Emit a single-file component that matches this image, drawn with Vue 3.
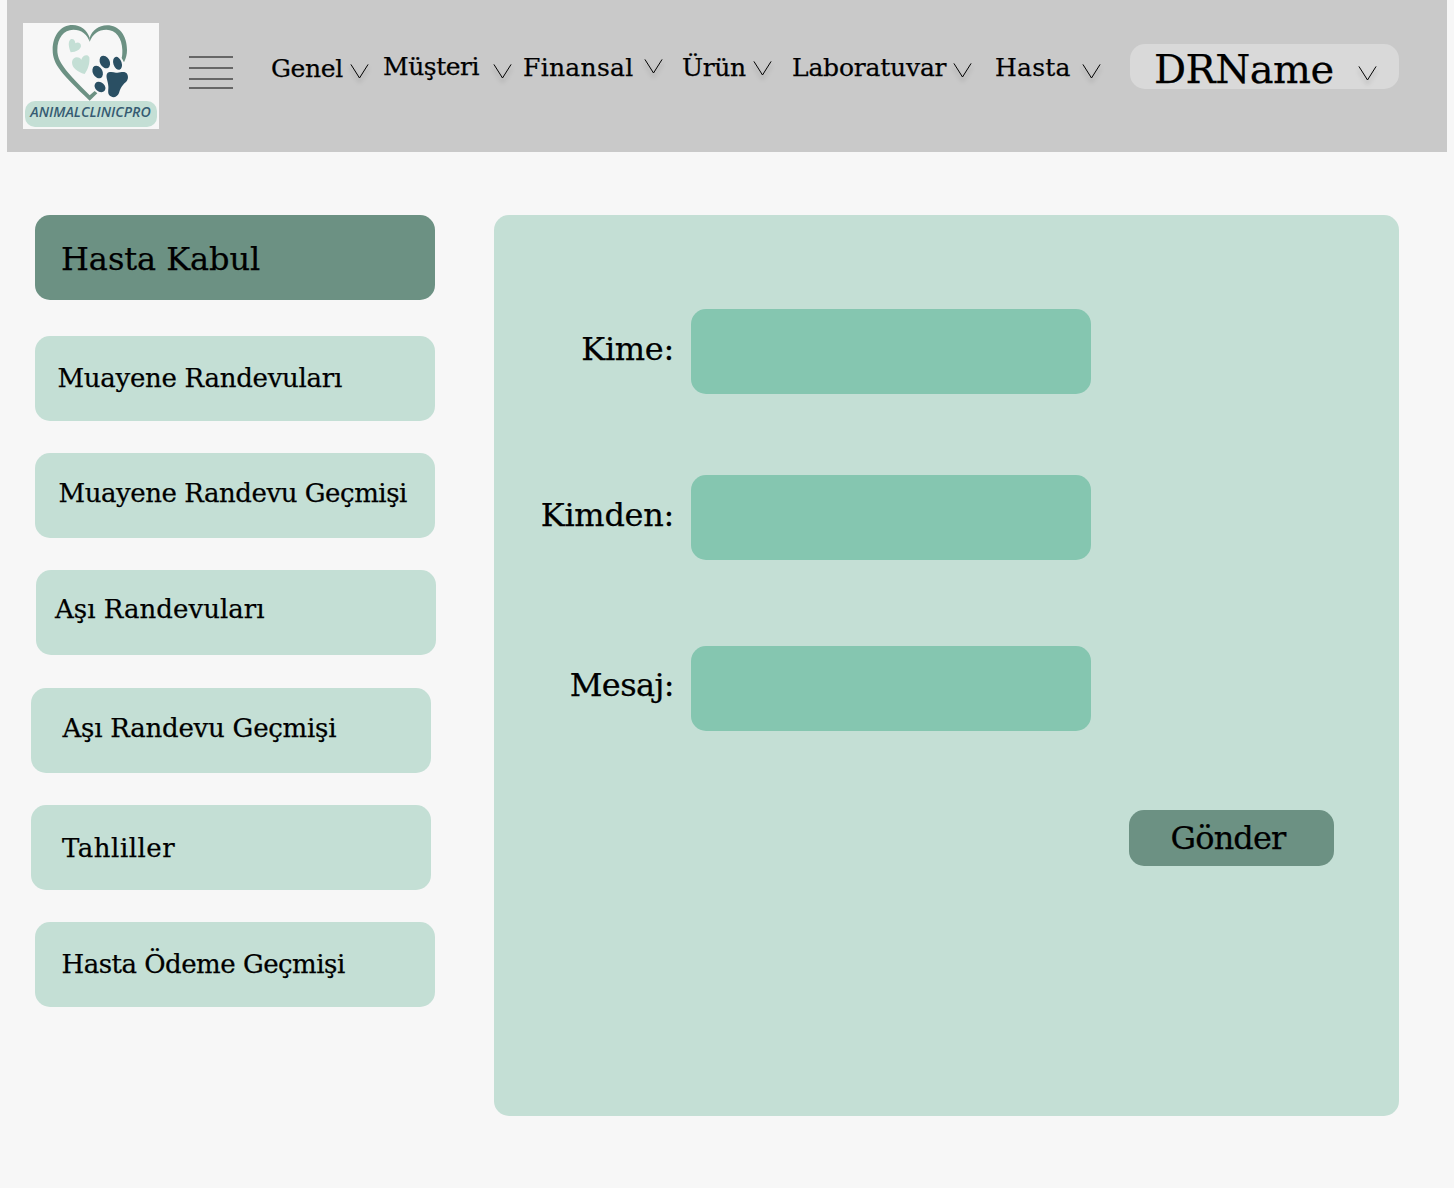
<script setup>
const navItems = [
  { key: 'genel', label: 'Genel' },
  { key: 'musteri', label: 'Müşteri' },
  { key: 'finansal', label: 'Finansal' },
  { key: 'urun', label: 'Ürün' },
  { key: 'laboratuvar', label: 'Laboratuvar' },
  { key: 'hasta', label: 'Hasta' },
]

const sideItems = [
  { key: 'exams', label: 'Muayene Randevuları' },
  { key: 'exam-history', label: 'Muayene Randevu Geçmişi' },
  { key: 'vaccines', label: 'Aşı Randevuları' },
  { key: 'vaccine-history', label: 'Aşı Randevu Geçmişi' },
  { key: 'tests', label: 'Tahliller' },
  { key: 'payments', label: 'Hasta Ödeme Geçmişi' },
]

const fields = [
  { key: 'to', label: 'Kime:' },
  { key: 'from', label: 'Kimden:' },
  { key: 'message', label: 'Mesaj:' },
]
</script>

<template>
  <div class="page">
    <header class="topbar">
      <svg class="logo" viewBox="9 9 408 318">
        <rect x="9" y="9" width="408" height="318" fill="#f7f7f7" />
        <g fill="#6c9183">
          <path d="M209 65C202 43 184 29 160 29C131 29 112 54 112 90C112 126 136 151 209 226L224 213L232 220L209 242C126 162 98 134 98 90C98 46 122 15 158 15C182 15 201 30 209 53Z" />
          <path d="M209 65C217 43 235 29 259 29C288 29 306 54 307 90C307 100 307 107 305 114L312 127C318 115 321 103 321 90C321 46 297 16 261 16C236 16 217 31 209 53Z" />
        </g>
        <g fill="#c4dfd5">
          <path d="M152 97C145 79 144 64 152 58C160 55 166 62 166 70C174 65 183 69 183 78C182 88 169 96 152 97Z" />
          <path d="M194 162C172 156 155 143 156 126C158 110 176 108 184 119C186 107 203 100 208 112C210 130 204 148 194 162Z" />
          <rect x="15" y="243" width="396" height="78" rx="30" />
        </g>
        <g fill="#2a4f63">
          <ellipse cx="254.500" cy="126" rx="14.500" ry="20" transform="rotate(-28 254.500 126)" />
          <ellipse cx="292.500" cy="130" rx="12.500" ry="20" transform="rotate(-18 292.500 130)" />
          <ellipse cx="233" cy="156" rx="14.500" ry="20" transform="rotate(-28 233 156)" />
          <ellipse cx="240" cy="201" rx="14" ry="18" transform="rotate(-50 240 201)" />
          <path d="M261 161C266 154 278 156 288 158C299 160 311 152 320 160C327 169 324 181 317 187C304 198 301 207 297 219C292 233 276 235 268 226C262 219 266 208 265 199C265 185 256 171 261 161Z" />
        </g>
        <text class="logo-text" x="31" y="291" textLength="361" lengthAdjust="spacingAndGlyphs">ANIMALCLINICPRO</text>
      </svg>

      <div class="burger"><i></i><i></i><i></i><i></i></div>

      <nav class="nav">
        <div v-for="item in navItems" :key="item.key" class="nav-item" :class="item.key">
          <span class="nav-label">{{ item.label }}</span>
          <svg class="chevron" viewBox="0 0 18 15"><path d="M-.1 .4L8.500 14L17.100 .4" /></svg>
        </div>
      </nav>

      <div class="user">
        <span class="user-name">DRName</span>
        <svg class="chevron" viewBox="0 0 18 15"><path d="M-.1 .4L8.500 14L17.100 .4" /></svg>
      </div>
    </header>

    <main class="content">
      <aside class="side">
        <div class="card title">Hasta Kabul</div>
        <div v-for="item in sideItems" :key="item.key" class="card" :class="item.key">{{ item.label }}</div>
      </aside>

      <section class="panel">
        <div v-for="f in fields" :key="f.key" class="field" :class="f.key">
          <label class="field-label">{{ f.label }}</label>
          <div class="field-box"></div>
        </div>
        <button class="send">Gönder</button>
      </section>
    </main>
  </div>
</template>

<style>
body {
  background: #f7f7f7;
}
</style>

<style scoped>
.page {
  width: 1454px;
  height: 1188px;
  overflow: hidden;
  box-sizing: border-box;
  padding: 0 7px;
  color: #000;
  font-family: "DejaVu Serif", "Liberation Serif", serif;
  -webkit-text-stroke: 0.25px #000;
}
.topbar {
  display: flex;
  align-items: flex-start;
  box-sizing: border-box;
  height: 152px;
  padding-left: 16px;
  background: #c9c9c9;
}
.logo {
  flex: none;
  width: 136px;
  height: 106px;
  margin-top: 23px;
  overflow: visible;
}
.logo-text {
  font: italic 600 44px "Open Sans", sans-serif;
  fill: #365b72;
  -webkit-text-stroke: 0;
}
.burger {
  flex: none;
  display: flex;
  flex-direction: column;
  gap: 9px;
  width: 44px;
  margin: 56px 0 0 30px;
}
.burger i {
  height: 2px;
  background: #666;
}
.burger i:last-child {
  margin-top: -2px;
}
.nav {
  flex: none;
  display: flex;
  align-items: flex-start;
  width: 897px;
}
.nav-item {
  flex: none;
  display: flex;
  align-items: flex-start;
  justify-content: space-between;
  font-size: 25px;
  line-height: 30px;
  white-space: nowrap;
}
.nav-label {
  padding-top: 1px;
}
.chevron {
  flex: none;
  width: 18px;
  height: 15px;
  overflow: visible;
  fill: none;
  stroke: #000;
  stroke-width: 1;
  filter: drop-shadow(0 4px 2px rgba(0, 0, 0, 0.25));
}
.genel { width: 98px; margin: 53px 0 0 38px; letter-spacing: -0.35px; }
.genel .chevron { margin-top: 11px; }
.musteri { width: 129px; margin: 51px 0 0 14px; letter-spacing: -0.45px; }
.musteri .chevron { margin-top: 13px; }
.finansal { width: 140px; margin: 52px 0 0 11px; letter-spacing: 0.3px; }
.finansal .chevron { margin-top: 7px; }
.urun { width: 90px; margin: 52px 0 0 19px; letter-spacing: -0.4px; }
.urun .chevron { margin-top: 9px; }
.laboratuvar { width: 180px; margin: 52px 0 0 20px; letter-spacing: -0.2px; }
.laboratuvar .chevron { margin-top: 11px; }
.hasta { width: 106px; margin: 52px 0 0 23px; letter-spacing: 0.25px; }
.hasta .chevron { margin-top: 12px; }
.user {
  flex: none;
  display: flex;
  align-items: flex-start;
  justify-content: space-between;
  box-sizing: border-box;
  width: 269px;
  height: 45px;
  margin-top: 44px;
  padding: 0 22px 0 24px;
  border-radius: 15px;
  background: #d9d9d9;
}
.user-name {
  font-size: 40px;
  line-height: 50px;
  letter-spacing: -0.5px;
}
.user .chevron {
  margin-top: 22px;
}
.content {
  display: flex;
  align-items: flex-start;
  padding: 63px 0 0 28px;
}
.side {
  flex: none;
  width: 459px;
}
.card {
  box-sizing: border-box;
  width: 400px;
  height: 85px;
  margin-bottom: 32px;
  border-radius: 15px;
  background: #c4dfd5;
  font-size: 26px;
  line-height: 34px;
  white-space: nowrap;
}
.card.title {
  margin-bottom: 36px;
  padding: 25px 0 0 26px;
  background: #6c9183;
  font-size: 32px;
  line-height: 38px;
  letter-spacing: -0.05px;
}
.exams { padding: 25px 0 0 22.500px; letter-spacing: -0.28px; }
.exam-history { padding: 23px 0 0 23.500px; letter-spacing: -0.45px; }
.card.vaccines { margin: 0 0 33px 1px; padding: 22px 0 0 19px; letter-spacing: 0.03px; }
.vaccine-history { margin-left: -4px; padding: 23px 0 0 31.500px; letter-spacing: -0.23px; }
.tests { margin-left: -4px; padding: 26px 0 0 31px; letter-spacing: 0.5px; }
.payments { padding: 25px 0 0 26.500px; letter-spacing: -0.5px; }
.panel {
  flex: none;
  display: flex;
  flex-direction: column;
  box-sizing: border-box;
  width: 905px;
  height: 901px;
  padding: 94px 65px 0 0;
  border-radius: 15px;
  background: #c4dfd5;
}
.field {
  display: flex;
  align-items: flex-start;
}
.field.from { margin-top: 81px; }
.field.message { margin-top: 86px; }
.field-label {
  width: 180px;
  padding-top: 21px;
  margin-right: 17px;
  font-size: 32px;
  line-height: 38px;
  text-align: right;
  letter-spacing: -0.3px;
}
.field.message .field-label {
  padding-top: 20px;
  letter-spacing: -0.6px;
}
.field-box {
  width: 400px;
  height: 85px;
  border-radius: 15px;
  background: #85c6b0;
}
.send {
  align-self: flex-end;
  box-sizing: border-box;
  width: 205px;
  height: 56px;
  margin-top: 79px;
  padding: 0 7px 0 0;
  border: 0;
  border-radius: 15px;
  background: #6c9183;
  color: #000;
  font: 32px/56px "DejaVu Serif", "Liberation Serif", serif;
  letter-spacing: -0.9px;
}
</style>
